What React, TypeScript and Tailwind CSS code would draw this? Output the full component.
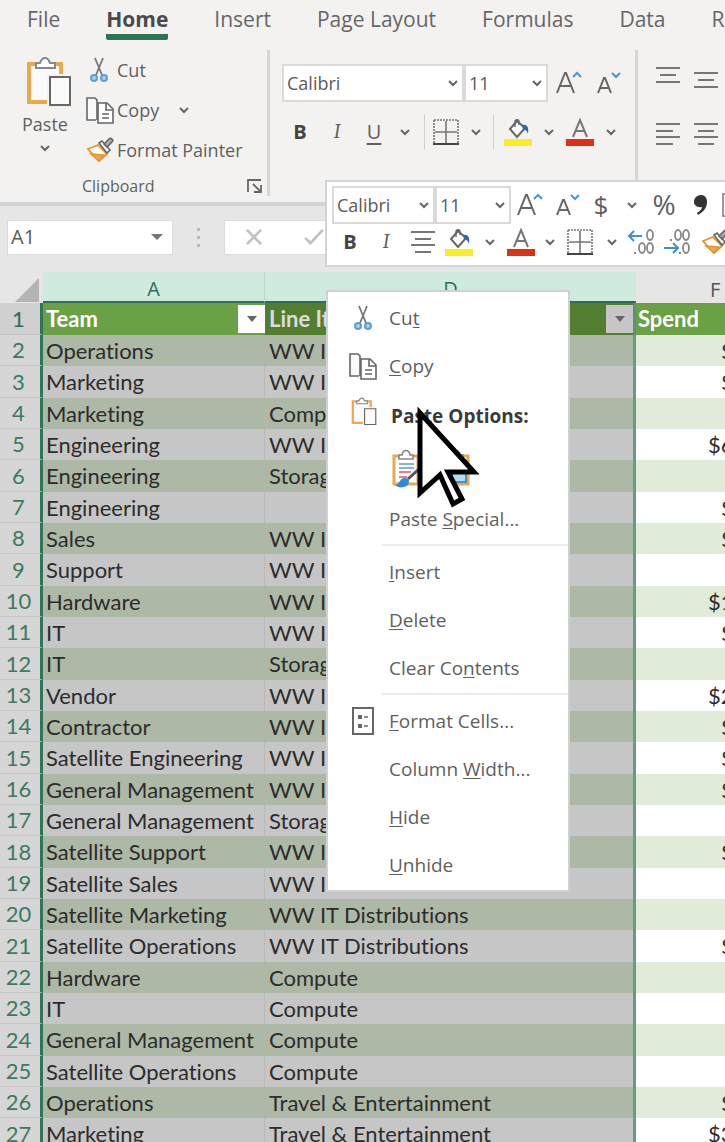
import type { ReactNode } from "react";

interface IconProps {
  className?: string;
}

const Chevron = ({ className = "" }: IconProps) => (
  <svg viewBox="0 0 10 8" className={`w-[10px] h-2 shrink-0 ${className}`} fill="none" stroke="#666" strokeWidth="2">
    <path d="M1 2l4 4 4-4" />
  </svg>
);

const ScissorsIcon = ({ className = "" }: IconProps) => (
  <svg viewBox="0 0 20 26" className={`shrink-0 ${className}`} fill="none">
    <path d="M6 1l7 17M14 1L7 18" stroke="#777" strokeWidth="1.8" />
    <circle cx="5" cy="21" r="3" stroke="#5b9fd6" strokeWidth="2" fill="#a9d0ee" />
    <circle cx="15" cy="21" r="3" stroke="#5b9fd6" strokeWidth="2" fill="#a9d0ee" />
  </svg>
);

const CopyIcon = ({ className = "" }: IconProps) => (
  <svg viewBox="0 0 28 28" className={`shrink-0 ${className}`} stroke="#666" strokeWidth="1.6">
    <path d="M10 24H1V2h8l2 2v20" fill="#fafafa" />
    <path d="M12 7h9l6 6v14H12z" fill="#fff" />
    <path d="M20 7v7h7M16 18h7M16 22h7" fill="none" />
  </svg>
);

const PasteIcon = ({ className = "" }: IconProps) => (
  <svg viewBox="0 0 46 50" className={`shrink-0 ${className}`}>
    <path d="M3 8h32v38H3z" fill="#fafafa" stroke="#eba94b" strokeWidth="4" />
    <path d="M10 12V7h4c1-3 2-5 5-5s4 2 5 5h5v5z" fill="#fff" stroke="#888" strokeWidth="2" />
    <path d="M21 18h25v32H21z" fill="#f6f5f4" />
    <path d="M24 21h20v28H24z" fill="#fafafa" stroke="#666" strokeWidth="2" />
  </svg>
);

const BrushIcon = ({ className = "" }: IconProps) => (
  <svg viewBox="0 0 28 26" className={`shrink-0 ${className}`}>
    <path d="M2 12l10-4 9 9-8 7z" fill="#fff" stroke="#e3942f" strokeWidth="1.8" />
    <path d="M5 17l13 1-5 6z" fill="#f0a64c" stroke="#e3942f" strokeWidth="1.4" />
    <path d="M13 6l3-2 8 9-3 3z" fill="#fff" stroke="#666" strokeWidth="1.6" />
    <path d="M18 7l5-5c2-2 5 1 3 3l-5 5z" fill="#aaa" stroke="#666" strokeWidth="1.6" />
  </svg>
);

const BordersIcon = ({ className = "" }: IconProps) => (
  <svg viewBox="0 0 26 26" className={`w-[26px] h-[26px] shrink-0 ${className}`} fill="none" stroke="#777">
    <path d="M1 1h24v23M1 1v23" strokeWidth="1.6" strokeDasharray="2 1" />
    <path d="M13 2v22M2 13h22" strokeWidth="1.6" />
    <path d="M0 25h26" stroke="#444" strokeWidth="2" />
  </svg>
);

const FillIcon = ({ className = "" }: IconProps) => (
  <svg viewBox="0 0 28 28" className={`w-7 h-7 shrink-0 ${className}`}>
    <path d="M13 3l8 7-8 9-7-8z" fill="#fff" stroke="#666" strokeWidth="2" />
    <path d="M11 9V4c0-3 4-3 4 0v3" fill="none" stroke="#666" strokeWidth="1.4" />
    <path d="M18 7c5-1 7 2 6 9-1-3-2-4-5-5z" fill="#2f6aa5" />
    <path d="M0 21h28v7H0z" fill="#f8ec2b" />
  </svg>
);

const FontColorIcon = ({ className = "" }: IconProps) => (
  <svg viewBox="0 0 28 28" className={`w-7 h-7 shrink-0 ${className}`}>
    <path d="M7 19L14 2l7 17M9 13h10" fill="none" stroke="#777" strokeWidth="2" />
    <path d="M0 21h28v7H0z" fill="#e02f17" />
  </svg>
);

const GrowFontIcon = ({ className = "" }: IconProps) => (
  <svg viewBox="0 0 26 26" className={`w-[26px] h-[26px] shrink-0 ${className}`} fill="none" strokeWidth="2">
    <path d="M1 23l8-20h1l8 20M4 16h12" stroke="#666" />
    <path d="M17 7l4-4 4 4" stroke="#4b97c8" />
  </svg>
);

const ShrinkFontIcon = ({ className = "" }: IconProps) => (
  <svg viewBox="0 0 26 26" className={`w-[26px] h-[26px] shrink-0 ${className}`} fill="none" strokeWidth="2">
    <path d="M2 23L8 8h1l6 15M4 18h9" stroke="#666" />
    <path d="M16 3l4 4 4-4" stroke="#4b97c8" />
  </svg>
);

const LinesIcon = ({ d, className = "" }: IconProps & { d: string }) => (
  <svg viewBox="0 0 24 24" className={`w-6 h-6 shrink-0 ${className}`} fill="none" stroke="#777" strokeWidth="2">
    <path d={d} />
  </svg>
);

const DecimalIcon = ({ increase }: { increase: boolean }) => (
  <svg viewBox="0 0 28 28" className="w-7 h-7 shrink-0" fill="none" stroke="#888" strokeWidth="1.8">
    {increase ? (
      <>
        <ellipse cx="23" cy="7" rx="3" ry="5" />
        <ellipse cx="15" cy="20" rx="3" ry="5" />
        <ellipse cx="23" cy="20" rx="3" ry="5" />
        <path d="M7 25h2" />
        <path d="M15 8H2m5-5L2 8l5 5" stroke="#3c8fd0" strokeWidth="2" />
      </>
    ) : (
      <>
        <ellipse cx="15" cy="7" rx="3" ry="5" />
        <ellipse cx="23" cy="7" rx="3" ry="5" />
        <ellipse cx="23" cy="20" rx="3" ry="5" />
        <path d="M7 12h2M16 25h2" />
        <path d="M1 20h14m-5-5l5 5-5 5" stroke="#3c8fd0" strokeWidth="2" />
      </>
    )}
  </svg>
);

const FormatCellsIcon = () => (
  <svg viewBox="0 0 22 28" className="w-[22px] h-7 shrink-0" fill="none" stroke="#666">
    <path d="M1 1h20v26H1z" strokeWidth="2" />
    <path d="M6 10h4M6 19h4" strokeWidth="4" />
    <path d="M12 10h4M12 19h4" strokeWidth="1.6" />
  </svg>
);

const PasteFormatIcon = () => (
  <svg viewBox="0 0 30 40" className="w-[30px] h-10 shrink-0">
    <path d="M3 7h24v28H3z" fill="#fff" stroke="#e6a850" strokeWidth="3" />
    <path d="M8 10V6h3c1-6 7-6 8 0h3v4z" fill="#fff" stroke="#888" strokeWidth="1.6" />
    <path d="M8 15h15M8 19h15" stroke="#5b9bd5" strokeWidth="1.6" />
    <path d="M8 23h12M8 28h8" stroke="#e0574f" strokeWidth="1.6" />
    <path d="M28 20L17 30" stroke="#555" strokeWidth="3" />
    <path d="M4 36c5 0 4-7 10-7 6 0 5 8-1 9-4 1-7 0-9-2z" fill="#2f8ad8" />
  </svg>
);

const PasteValuesIcon = () => (
  <svg viewBox="0 0 30 40" className="w-[30px] h-10 shrink-0">
    <path d="M3 7h24v28H3z" fill="#fff" stroke="#e6a850" strokeWidth="3" />
    <path d="M8 10V6h3c1-6 7-6 8 0h3v4z" fill="#fff" stroke="#888" strokeWidth="1.6" />
    <path d="M11 24h14v9H11z" fill="#b9d9ef" stroke="#4f8fb8" strokeWidth="2" />
  </svg>
);

interface DropdownProps {
  label: string;
  value: string;
  className: string;
}

const Dropdown = ({ label, value, className }: DropdownProps) => (
  <div className={`grid items-center border-2 border-[#dcdad9] bg-white ${className}`}>
    <select
      aria-label={label}
      className="col-start-1 row-start-1 w-full h-full appearance-none pl-[3px] text-[#5a5a5a] bg-transparent outline-none"
    >
      <option>{value}</option>
    </select>
    <Chevron className="col-start-1 row-start-1 justify-self-end mr-1 pointer-events-none" />
  </div>
);

interface ToolProps {
  label: string;
  className?: string;
  children: ReactNode;
}

const Tool = ({ label, className = "", children }: ToolProps) => (
  <button aria-label={label} className={`flex items-center justify-center shrink-0 ${className}`}>
    {children}
  </button>
);

const tabs = ["File", "Home", "Insert", "Page Layout", "Formulas", "Data", "Review"];

const Ribbon = () => (
  <header className="bg-[#f3f2f1] h-[202px] shrink-0 overflow-hidden">
    <nav className="flex gap-[46px] pl-[27px] h-10 text-[21px] leading-7 whitespace-nowrap text-[#666]">
      {tabs.map((tab) => (
        <a
          key={tab}
          href="#"
          className={
            tab === "Home"
              ? "pt-[5px] font-bold text-[#4a4a4a] border-b-[6px] border-[#2e7352] rounded-xs"
              : "pt-[5px]"
          }
        >
          {tab}
        </a>
      ))}
    </nav>

    <div className="flex pt-[10px] text-lg leading-6 text-[#5f5f5f]">
      <section className="w-[270px] h-[146px] shrink-0 border-r-3 border-[#d8d6d5] flex flex-col">
        <div className="flex">
          <button className="flex flex-col items-center w-[86px] pl-1 pt-[6px]">
            <PasteIcon className="w-[46px] h-[50px] ml-2" />
            <span className="pt-[6px]">Paste</span>
            <Chevron className="mt-2" />
          </button>
          <div className="flex flex-col">
            <button className="flex items-center h-10">
              <ScissorsIcon className="w-[20px] h-[26px] ml-[3px]" />
              <span className="pl-2">Cut</span>
            </button>
            <button className="flex items-center h-10">
              <CopyIcon className="w-7 h-7" />
              <span className="pl-[3px]">Copy</span>
              <Chevron className="ml-5" />
            </button>
            <button className="flex items-center h-10">
              <BrushIcon className="w-7 h-[26px]" />
              <span className="pl-[3px] whitespace-nowrap">Format Painter</span>
            </button>
          </div>
        </div>
        <div className="flex items-center h-7 mt-1 pl-[82px] pr-1 text-base">
          <span className="grow">Clipboard</span>
          <Tool label="Clipboard settings">
            <svg viewBox="0 0 16 16" className="w-4 h-4" fill="none" stroke="#666" strokeWidth="1.8">
              <path d="M1 14V2h13M6 6l8 8M14 7v7H7" />
            </svg>
          </Tool>
        </div>
      </section>

      <section className="w-[368px] h-[152px] shrink-0 border-r-3 border-[#d8d6d5] pt-[14px] pl-3">
        <div className="flex items-center">
          <Dropdown label="Font" value="Calibri" className="w-[182px] h-[38px]" />
          <Dropdown label="Font size" value="11" className="w-[84px] h-[38px]" />
          <Tool label="Increase font size" className="ml-2">
            <GrowFontIcon />
          </Tool>
          <Tool label="Decrease font size" className="ml-[14px]">
            <ShrinkFontIcon />
          </Tool>
        </div>
        <div className="flex items-center h-9 mt-3">
          <Tool label="Bold" className="w-9 text-xl font-bold text-[#444]">B</Tool>
          <Tool label="Italic" className="w-[38px] text-xl italic font-serif">I</Tool>
          <Tool label="Underline" className="w-9 text-xl underline underline-offset-4">U</Tool>
          <Chevron className="ml-2" />
          <span className="w-px h-9 bg-[#d2d0cf] ml-[14px]" />
          <Tool label="Borders" className="ml-2">
            <BordersIcon />
          </Tool>
          <Chevron className="ml-3" />
          <span className="w-px h-9 bg-[#d2d0cf] ml-3" />
          <Tool label="Fill color" className="ml-[10px]">
            <FillIcon />
          </Tool>
          <Chevron className="ml-3" />
          <Tool label="Font color" className="ml-3">
            <FontColorIcon />
          </Tool>
          <Chevron className="ml-3" />
        </div>
      </section>

      <section className="pl-[18px] pt-3 shrink-0">
        <div className="flex gap-[14px] h-[38px]">
          <Tool label="Top align" className="h-6">
            <LinesIcon d="M0 6h24M4 13h16M0 20h24" />
          </Tool>
          <Tool label="Middle align" className="h-[34px]">
            <LinesIcon d="M0 6h24M4 13h16M0 20h24" />
          </Tool>
        </div>
        <div className="flex gap-[14px] h-9 mt-4">
          <Tool label="Align left">
            <LinesIcon d="M0 2h24M0 9h17M0 15h24M0 22h17" />
          </Tool>
          <Tool label="Center">
            <LinesIcon d="M0 2h24M4 9h16M0 15h24M4 22h16" />
          </Tool>
        </div>
      </section>
    </div>
  </header>
);

const FormulaBar = () => (
  <div className="flex items-center h-[70px] shrink-0 pl-[7px] pb-1 border-t-4 border-[#d3d3d3] bg-[#e6e6e6]">
    <div className="flex items-center w-[166px] h-[35px] bg-white border border-[#dcdcdc] text-xl text-[#5a5a5a]">
      <input aria-label="Name box" defaultValue="A1" className="w-full pl-[3px] bg-transparent outline-none" />
      <Tool label="Open name list" className="pr-[9px]">
        <svg viewBox="0 0 12 6" className="w-3 h-[6px]" fill="#777">
          <path d="M0 0h12L6 6z" />
        </svg>
      </Tool>
    </div>
    <span className="flex flex-col gap-[5px] mx-6">
      <i className="size-[3px] bg-[#b9b9b9]" />
      <i className="size-[3px] bg-[#b9b9b9]" />
      <i className="size-[3px] bg-[#b9b9b9]" />
    </span>
    <div className="flex items-center grow h-[35px] bg-white border border-[#dcdcdc] pl-5">
      <Tool label="Cancel">
        <svg viewBox="0 0 20 18" className="w-[18px] h-4" fill="none" stroke="#c2c2c2" strokeWidth="3">
          <path d="M2 1l16 16M18 1L2 17" />
        </svg>
      </Tool>
      <Tool label="Enter" className="ml-10">
        <svg viewBox="0 0 22 18" className="w-[22px] h-4" fill="none" stroke="#c2c2c2" strokeWidth="3">
          <path d="M1 10l6 6L21 1" />
        </svg>
      </Tool>
    </div>
  </div>
);

interface Row {
  team: string;
  item: string;
  spend: string;
}

const rows: Row[] = [
  { team: "Operations", item: "WW IT Distributions", spend: "$" },
  { team: "Marketing", item: "WW IT Distributions", spend: "$" },
  { team: "Marketing", item: "Compute", spend: "" },
  { team: "Engineering", item: "WW IT Distributions", spend: "$6" },
  { team: "Engineering", item: "Storage", spend: "" },
  { team: "Engineering", item: "", spend: "$" },
  { team: "Sales", item: "WW IT Distributions", spend: "$" },
  { team: "Support", item: "WW IT Distributions", spend: "" },
  { team: "Hardware", item: "WW IT Distributions", spend: "$1" },
  { team: "IT", item: "WW IT Distributions", spend: "$" },
  { team: "IT", item: "Storage", spend: "" },
  { team: "Vendor", item: "WW IT Distributions", spend: "$2" },
  { team: "Contractor", item: "WW IT Distributions", spend: "$" },
  { team: "Satellite Engineering", item: "WW IT Distributions", spend: "$" },
  { team: "General Management", item: "WW IT Distributions", spend: "$" },
  { team: "General Management", item: "Storage", spend: "" },
  { team: "Satellite Support", item: "WW IT Distributions", spend: "$" },
  { team: "Satellite Sales", item: "WW IT Distributions", spend: "" },
  { team: "Satellite Marketing", item: "WW IT Distributions", spend: "" },
  { team: "Satellite Operations", item: "WW IT Distributions", spend: "$" },
  { team: "Hardware", item: "Compute", spend: "" },
  { team: "IT", item: "Compute", spend: "" },
  { team: "General Management", item: "Compute", spend: "" },
  { team: "Satellite Operations", item: "Compute", spend: "" },
  { team: "Operations", item: "Travel & Entertainment", spend: "$" },
  { team: "Marketing", item: "Travel & Entertainment", spend: "$3" },
];

const FilterButton = ({ className }: { className: string }) => (
  <button aria-label="Filter" className={`flex items-center justify-center w-[27px] h-7 ${className}`}>
    <svg viewBox="0 0 10 6" className="w-[10px] h-[6px]" fill="#666">
      <path d="M0 0h10L5 6z" />
    </svg>
  </button>
);

const Sheet = () => (
  <div className="grow overflow-hidden bg-[#e6e6e6]">
    <table className="table-fixed w-full border-separate border-spacing-0 font-['Lato',sans-serif] text-[22px] leading-7 whitespace-nowrap text-[#2c2c2c] [font-variant-ligatures:none]">
      <colgroup>
        <col className="w-[43px]" />
        <col className="w-[222px]" />
        <col className="w-[371px]" />
        <col />
      </colgroup>
      <thead>
        <tr className="h-[31px] font-['Open_Sans',sans-serif] text-xl leading-6 text-[#2f6e55]">
          <td className="p-0">
            <svg viewBox="0 0 24 24" className="w-6 h-6 ml-[15px] mt-1" fill="#b4b4b4">
              <path d="M24 0v24H0z" />
            </svg>
          </td>
          <th className="p-0 pt-1 font-normal bg-[#cfeadf] border-b-2 border-[#2f6e55] border-r border-r-[#bcd8cd]">A</th>
          <th className="p-0 pt-1 font-normal bg-[#cfeadf] border-b-2 border-[#2f6e55]">D</th>
          <th className="p-0 pt-1 pl-[74px] text-left font-normal text-[#555]">F</th>
        </tr>
      </thead>
      <tbody>
        <tr className="h-8 text-white font-bold">
          <th className="p-0 pr-[3px] font-normal text-[#2f6e55] bg-[#d0d0d0] border-b border-[#c2c2c2] border-r-3 border-r-[#2f7557]">
            1
          </th>
          <td className="p-0 pl-[3px] bg-[#69a144]">
            <div className="flex items-center justify-between">
              Team
              <FilterButton className="bg-white" />
            </div>
          </td>
          <td className="p-0 pl-1 bg-[#537e30] text-[#dcdcdc] border-r-3 border-[#5f8f78]">
            <div className="flex items-center justify-between">
              Line Item
              <FilterButton className="bg-[#c6c6c6]" />
            </div>
          </td>
          <td className="p-0 pl-[2px] bg-[#69a144]">Spend</td>
        </tr>
        {rows.map((row, i) => (
          <tr key={i} className="group h-[31px] nth-[3n]:h-8">
            <th className="p-0 pr-[3px] font-normal text-[#3b7a61] bg-[#d6d6d6] border-b border-[#c6c6c6] border-r-3 border-r-[#2f7557]">
              {i + 2}
            </th>
            <td className="p-0 pl-[3px] bg-[#c6c6c6] border-r border-[#b9b9b9] group-even:bg-[#aeb8a7] group-even:border-[#aeb8a7]">
              {row.team}
            </td>
            <td className="p-0 pl-1 bg-[#c6c6c6] border-r-3 border-[#6b9a84] group-even:bg-[#aeb8a7]">{row.item}</td>
            <td
              className={`p-0 overflow-hidden bg-white group-even:bg-[#e0ecd9] ${
                row.spend.length > 1 ? "pl-[72px]" : "pl-[85px]"
              }`}
            >
              {row.spend}
            </td>
          </tr>
        ))}
      </tbody>
    </table>
  </div>
);

const MiniToolbar = () => (
  <div className="absolute left-[325px] right-0 top-[180px] h-[87px] overflow-hidden bg-white border-2 border-r-0 border-[#d3d3d3] pl-[5px] pt-1 text-lg text-[#5f5f5f]">
    <div className="flex items-center h-[38px]">
      <Dropdown label="Mini font" value="Calibri" className="w-[103px] h-[38px] shrink-0" />
      <Dropdown label="Mini font size" value="11" className="w-[76px] h-[38px] shrink-0" />
      <Tool label="Increase font" className="ml-[6px]">
        <GrowFontIcon />
      </Tool>
      <Tool label="Decrease font" className="ml-3">
        <ShrinkFontIcon />
      </Tool>
      <Tool label="Currency" className="w-4 ml-3 text-[26px]">$</Tool>
      <Chevron className="ml-[18px]" />
      <Tool label="Percent" className="w-[54px] text-[28px]">%</Tool>
      <Tool label="Comma style" className="ml-[3px]">
        <svg viewBox="0 0 14 22" className="w-[14px] h-[22px]" fill="#333">
          <path d="M7 1c4 0 6 3 6 7 0 6-4 10-9 13l-1-2c3-2 5-4 5-6-5 1-8-2-8-5 0-4 3-7 7-7z" />
        </svg>
      </Tool>
      <span className="w-1 h-6 ml-[14px] border-2 border-r-0 border-[#999] shrink-0" />
    </div>
    <div className="flex items-center h-[35px]">
      <Tool label="Bold text" className="w-9 text-xl font-bold text-[#444]">B</Tool>
      <Tool label="Italic text" className="w-9 text-xl italic font-serif">I</Tool>
      <Tool label="Center text" className="ml-[7px]">
        <LinesIcon d="M0 2h24M4 9h16M0 15h24M4 22h16" />
      </Tool>
      <Tool label="Fill" className="ml-[10px]">
        <FillIcon />
      </Tool>
      <Chevron className="ml-3" />
      <Tool label="Text color" className="ml-3">
        <FontColorIcon />
      </Tool>
      <Chevron className="ml-[10px]" />
      <Tool label="Cell borders" className="ml-3">
        <BordersIcon />
      </Tool>
      <Chevron className="ml-[14px]" />
      <Tool label="Increase decimal" className="ml-[10px]">
        <DecimalIcon increase />
      </Tool>
      <Tool label="Decrease decimal" className="ml-2">
        <DecimalIcon increase={false} />
      </Tool>
      <Tool label="Format painter" className="ml-[10px]">
        <BrushIcon className="w-7 h-[26px]" />
      </Tool>
    </div>
  </div>
);

interface MenuItemProps {
  icon?: ReactNode;
  before?: string;
  hotkey: string;
  after?: string;
}

const MenuItem = ({ icon, before, hotkey, after }: MenuItemProps) => (
  <button role="menuitem" className="flex items-center h-12 text-left">
    <span className="flex justify-center w-[61px] pl-2">{icon}</span>
    <span>
      {before}
      <u className="underline-offset-2">{hotkey}</u>
      {after}
    </span>
  </button>
);

const MenuDivider = () => <hr className="ml-[54px] mt-px mb-[2px] border-t-2 border-[#ececec]" />;

const ContextMenu = () => (
  <div
    role="menu"
    className="absolute left-[326px] top-[290px] w-[244px] flex flex-col pt-[2px] pb-px bg-white border-2 border-[#d0d0d0] text-[19px] leading-6 whitespace-nowrap text-[#5f5f5f]"
  >
    <MenuItem icon={<ScissorsIcon className="w-5 h-[26px]" />} before="Cu" hotkey="t" />
    <MenuItem icon={<CopyIcon className="w-7 h-7" />} hotkey="C" after="opy" />
    <div className="flex items-center h-[52px] font-bold text-[#3a3a3a]">
      <span className="flex justify-center w-[63px] pl-3 pr-1 pb-[10px]">
        <PasteIcon className="w-[26px] h-7" />
      </span>
      Paste Options:
    </div>
    <div className="flex items-center gap-5 h-[53px] pl-[63px]">
      <Tool label="Paste with formatting">
        <PasteFormatIcon />
      </Tool>
      <Tool label="Paste values">
        <PasteValuesIcon />
      </Tool>
    </div>
    <MenuItem before="Paste " hotkey="S" after="pecial..." />
    <MenuDivider />
    <MenuItem hotkey="I" after="nsert" />
    <MenuItem hotkey="D" after="elete" />
    <MenuItem before="Clear Co" hotkey="n" after="tents" />
    <MenuDivider />
    <MenuItem icon={<FormatCellsIcon />} hotkey="F" after="ormat Cells..." />
    <MenuItem before="Column " hotkey="W" after="idth..." />
    <MenuItem hotkey="H" after="ide" />
    <MenuItem hotkey="U" after="nhide" />
  </div>
);

const Pointer = () => (
  <svg viewBox="0 0 68 106" className="absolute left-[415px] top-[405px] w-[68px] h-[106px] pointer-events-none">
    <path
      d="M5 8v80l20-18 13 29 9-5-14-27h26z"
      fill="#fff"
      stroke="#000"
      strokeWidth="5"
      strokeLinejoin="miter"
    />
  </svg>
);

const App = () => {
  return (
    <div className="relative flex flex-col h-screen overflow-hidden font-['Open_Sans',sans-serif]">
      <Ribbon />
      <FormulaBar />
      <Sheet />
      <MiniToolbar />
      <ContextMenu />
      <Pointer />
    </div>
  );
};

export default App;
